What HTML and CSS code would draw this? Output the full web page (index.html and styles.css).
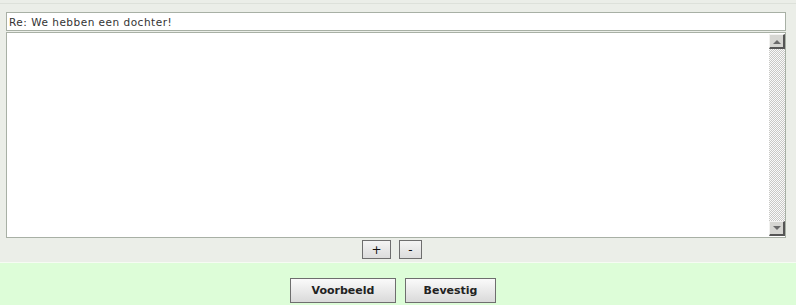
FILE: index.html
```html
<!DOCTYPE html>
<html>
<head>
<meta charset="utf-8">
<link rel="stylesheet" href="styles.css">
</head>
<body>
<div class="form">
  <div class="topline"></div>
  <div class="fields">
    <input class="subject" type="text" value="Re: We hebben een dochter!">
    <div class="editor">
      <textarea class="body"></textarea>
      <div class="scrollbar">
        <div class="arrow up"><span class="tri tri-up"></span></div>
        <div class="track"></div>
        <div class="arrow down"><span class="tri tri-down"></span></div>
      </div>
    </div>
    <div class="resize">
      <button class="small plus">+</button>
      <button class="small minus">-</button>
    </div>
  </div>
</div>
<div class="actions">
  <button class="big preview">Voorbeeld</button>
  <button class="big confirm">Bevestig</button>
</div>
</body>
</html>
```
FILE: styles.css
```css
html, body {
  margin: 0;
  padding: 0;
}
body {
  width: 796px;
  height: 305px;
  overflow: hidden;
  background: #ddfdd8;
  font-family: "DejaVu Sans", Verdana, sans-serif;
}
.form {
  background: #ebeee8;
  height: 262px;
  border-bottom: 1px solid #f6fbf3;
}
.topline {
  height: 3px;
  border-bottom: 1px solid #dde1da;
}
.fields {
  padding: 8px 10px 0 6px;
}
.subject {
  display: block;
  box-sizing: border-box;
  width: 780px;
  height: 19px;
  margin: 0;
  padding: 0 2px;
  border: 1px solid #a8b0a5;
  background: #fff;
  font-family: "DejaVu Sans", Verdana, sans-serif;
  font-size: 10.5px;
  letter-spacing: 0.5px;
  color: #333;
  outline: none;
}
.editor {
  display: flex;
  box-sizing: border-box;
  width: 780px;
  height: 206px;
  margin-top: 1px;
  border: 1px solid #a8b0a5;
  background: #fff;
}
.body {
  flex: 1;
  border: 0;
  margin: 0;
  padding: 2px;
  resize: none;
  outline: none;
  background: #fff;
}
.scrollbar {
  width: 16px;
  margin: 1px 0 1px 0;
  display: flex;
  flex-direction: column;
}
.arrow {
  box-sizing: border-box;
  height: 15px;
  background: #d6d6d2;
  border-top: 1px solid #f2f2f0;
  border-left: 1px solid #f2f2f0;
  border-right: 2px solid #555;
  border-bottom: 2px solid #555;
  display: flex;
  align-items: center;
  justify-content: center;
}
.track {
  flex: 1;
  background: repeating-conic-gradient(#c9c9c6 0 25%, #fafafa 0 50%) 0 0 / 2px 2px;
}
.tri {
  width: 0;
  height: 0;
  border-left: 4px solid transparent;
  border-right: 4px solid transparent;
}
.tri-up {
  border-bottom: 4px solid #6a6a6a;
  margin-top: 1px;
}
.tri-down {
  border-top: 4px solid #6a6a6a;
}
.resize {
  display: flex;
  justify-content: center;
  gap: 8px;
  margin-top: 2px;
  padding-right: 8px;
}
.small {
  box-sizing: border-box;
  height: 19px;
  padding: 0;
  border: 1px solid #6e6e6e;
  background: linear-gradient(#f4f4f4, #dcdcdc);
  font-family: "DejaVu Sans", Verdana, sans-serif;
  font-size: 12px;
  color: #111;
  line-height: 16px;
}
.plus { width: 29px; }
.minus { width: 23px; }
.actions {
  display: flex;
  justify-content: center;
  gap: 9px;
  padding-top: 15px;
  padding-right: 10px;
}
.big {
  box-sizing: border-box;
  height: 25px;
  padding: 0;
  border: 1px solid #6e6e6e;
  background: linear-gradient(#fafafa, #dadada);
  font-family: "DejaVu Sans", Verdana, sans-serif;
  font-weight: bold;
  font-size: 11px;
  color: #222;
}
.preview { width: 106px; }
.confirm { width: 91px; }
```
